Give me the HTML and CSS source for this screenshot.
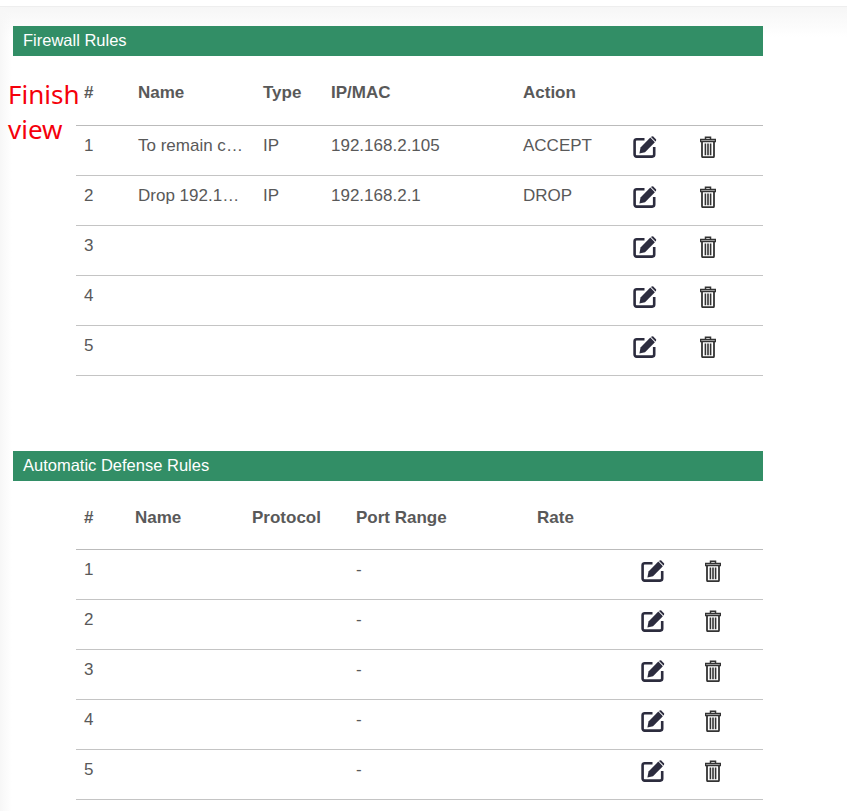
FILE: index.html
```html
<!DOCTYPE html>
<html lang="en">
<head>
<meta charset="utf-8">
<title>Rules</title>
<link rel="stylesheet" href="styles.css">
</head>
<body>
<svg class="defs" width="0" height="0" aria-hidden="true">
  <symbol id="edit" viewBox="0 0 24 22">
    <path d="M11.5 3.2H3.6A2 2 0 0 0 1.6 5.2V18.6A2 2 0 0 0 3.6 20.6H19.2A2 2 0 0 0 21.2 18.6V11" fill="none" stroke="currentColor" stroke-width="2.6"/>
    <path d="M17.3 1.6 21.9 6.2 12 16.2 6.4 17.4 7.5 11.5Z" fill="currentColor"/>
    <path d="M18.6.4 20 .2 23.2 3.4 23 4.9 22.5 5.4 18 .9Z" fill="currentColor"/>
  </symbol>
  <symbol id="trash" viewBox="0 0 16 22">
    <path d="M5.5 3V1.2H10.5V3M.5 3.6H15.5V5.4H.5Z" fill="none" stroke="currentColor" stroke-width="1.5"/>
    <path d="M2 5.5V20.2A1 1 0 0 0 3 21.2H13A1 1 0 0 0 14 20.2V5.5" fill="none" stroke="currentColor" stroke-width="1.8"/>
    <path d="M4.6 7.5H6.2V19.2H4.6ZM7.2 7.5H8.8V19.2H7.2ZM9.8 7.5H11.4V19.2H9.8Z" fill="currentColor"/>
  </symbol>
</svg>
<header class="topbar"></header>
<main class="page">
  <div class="note">Finish<br>view</div>

  <section class="panel">
    <h2 class="title">Firewall Rules</h2>
    <table class="rules fw">
      <colgroup><col class="c1"><col class="c2"><col class="c3"><col class="c4"><col class="c5"><col class="c6"><col class="c7"></colgroup>
      <thead><tr><th>#</th><th>Name</th><th>Type</th><th>IP/MAC</th><th>Action</th><th></th><th></th></tr></thead>
      <tbody>
        <tr><td>1</td><td class="clip">To remain connected</td><td>IP</td><td>192.168.2.105</td><td>ACCEPT</td><td><svg class="ic-edit"><use href="#edit"/></svg></td><td><svg class="ic-trash"><use href="#trash"/></svg></td></tr>
        <tr><td>2</td><td class="clip">Drop 192.168.2.1</td><td>IP</td><td>192.168.2.1</td><td>DROP</td><td><svg class="ic-edit"><use href="#edit"/></svg></td><td><svg class="ic-trash"><use href="#trash"/></svg></td></tr>
        <tr><td>3</td><td></td><td></td><td></td><td></td><td><svg class="ic-edit"><use href="#edit"/></svg></td><td><svg class="ic-trash"><use href="#trash"/></svg></td></tr>
        <tr><td>4</td><td></td><td></td><td></td><td></td><td><svg class="ic-edit"><use href="#edit"/></svg></td><td><svg class="ic-trash"><use href="#trash"/></svg></td></tr>
        <tr><td>5</td><td></td><td></td><td></td><td></td><td><svg class="ic-edit"><use href="#edit"/></svg></td><td><svg class="ic-trash"><use href="#trash"/></svg></td></tr>
      </tbody>
    </table>
  </section>

  <section class="panel second">
    <h2 class="title">Automatic Defense Rules</h2>
    <table class="rules ad">
      <colgroup><col class="c1"><col class="c2"><col class="c3"><col class="c4"><col class="c5"><col class="c6"><col class="c7"></colgroup>
      <thead><tr><th>#</th><th>Name</th><th>Protocol</th><th>Port Range</th><th>Rate</th><th></th><th></th></tr></thead>
      <tbody>
        <tr><td>1</td><td></td><td></td><td>-</td><td></td><td><svg class="ic-edit"><use href="#edit"/></svg></td><td><svg class="ic-trash"><use href="#trash"/></svg></td></tr>
        <tr><td>2</td><td></td><td></td><td>-</td><td></td><td><svg class="ic-edit"><use href="#edit"/></svg></td><td><svg class="ic-trash"><use href="#trash"/></svg></td></tr>
        <tr><td>3</td><td></td><td></td><td>-</td><td></td><td><svg class="ic-edit"><use href="#edit"/></svg></td><td><svg class="ic-trash"><use href="#trash"/></svg></td></tr>
        <tr><td>4</td><td></td><td></td><td>-</td><td></td><td><svg class="ic-edit"><use href="#edit"/></svg></td><td><svg class="ic-trash"><use href="#trash"/></svg></td></tr>
        <tr><td>5</td><td></td><td></td><td>-</td><td></td><td><svg class="ic-edit"><use href="#edit"/></svg></td><td><svg class="ic-trash"><use href="#trash"/></svg></td></tr>
      </tbody>
    </table>
  </section>
</main>
</body>
</html>
```
FILE: styles.css
```css
* { box-sizing: border-box; }
html, body { margin: 0; padding: 0; }
body {
  width: 847px;
  height: 811px;
  overflow: hidden;
  background: #fff;
  font-family: "Liberation Sans", Arial, sans-serif;
  font-size: 16px;
  color: #595959;
}
.defs { position: absolute; }
.topbar {
  height: 7px;
  background: #fff;
  border-bottom: 1px solid #eee;
}
.page {
  position: relative;
  height: 804px;
  padding: 19px 84px 0 13px;
  background:
    linear-gradient(to bottom, #f6f6f6, #fff 30px),
    #fff;
}
.page::before {
  content: "";
  position: absolute;
  inset: 0 auto 0 0;
  width: 12px;
  background: linear-gradient(to right, #f7f7f7, rgba(255,255,255,0));
}
.note {
  position: absolute;
  left: 8px;
  top: 70px;
  font-family: "Noto Sans", sans-serif;
  font-size: 26px;
  line-height: 35px;
  color: #f5000b;
}
.panel { position: relative; }
.second { margin-top: 75px; }
.title {
  margin: 0;
  height: 30px;
  padding-left: 10px;
  background: #328e66;
  color: #fff;
  font-size: 16.5px;
  font-weight: 400;
  line-height: 28px;
}
.rules {
  margin: 8px 0 0 63px;
  width: 687px;
  border-collapse: collapse;
  table-layout: fixed;
}
.rules th {
  height: 61px;
  padding: 0 8px 2px;
  text-align: left;
  vertical-align: middle;
  font-size: 17px;
  font-weight: 700;
  color: #595959;
}
.rules thead tr { border-bottom: 1px solid #bbb; }
.rules td {
  height: 50px;
  padding: 10px 8px 0;
  vertical-align: top;
  line-height: 20px;
  font-size: 17px;
  white-space: nowrap;
  overflow: hidden;
}
.rules tbody tr { border-bottom: 1px solid #c4c4c4; }
.rules .clip { text-overflow: ellipsis; }
.ic-edit { display: block; width: 24px; height: 22px; color: #2c2c3e; margin-top: 0; }
.ic-trash { display: block; width: 16px; height: 22px; color: #333; }
.fw .c1 { width: 54px; }
.fw .c2 { width: 125px; }
.fw .c3 { width: 68px; }
.fw .c4 { width: 192px; }
.fw .c5 { width: 110px; }
.fw .c6 { width: 67px; }
.ad .c1 { width: 51px; }
.ad .c2 { width: 117px; }
.ad .c3 { width: 104px; }
.ad .c4 { width: 181px; }
.ad .c5 { width: 104px; }
.ad .c6 { width: 64px; }
```
